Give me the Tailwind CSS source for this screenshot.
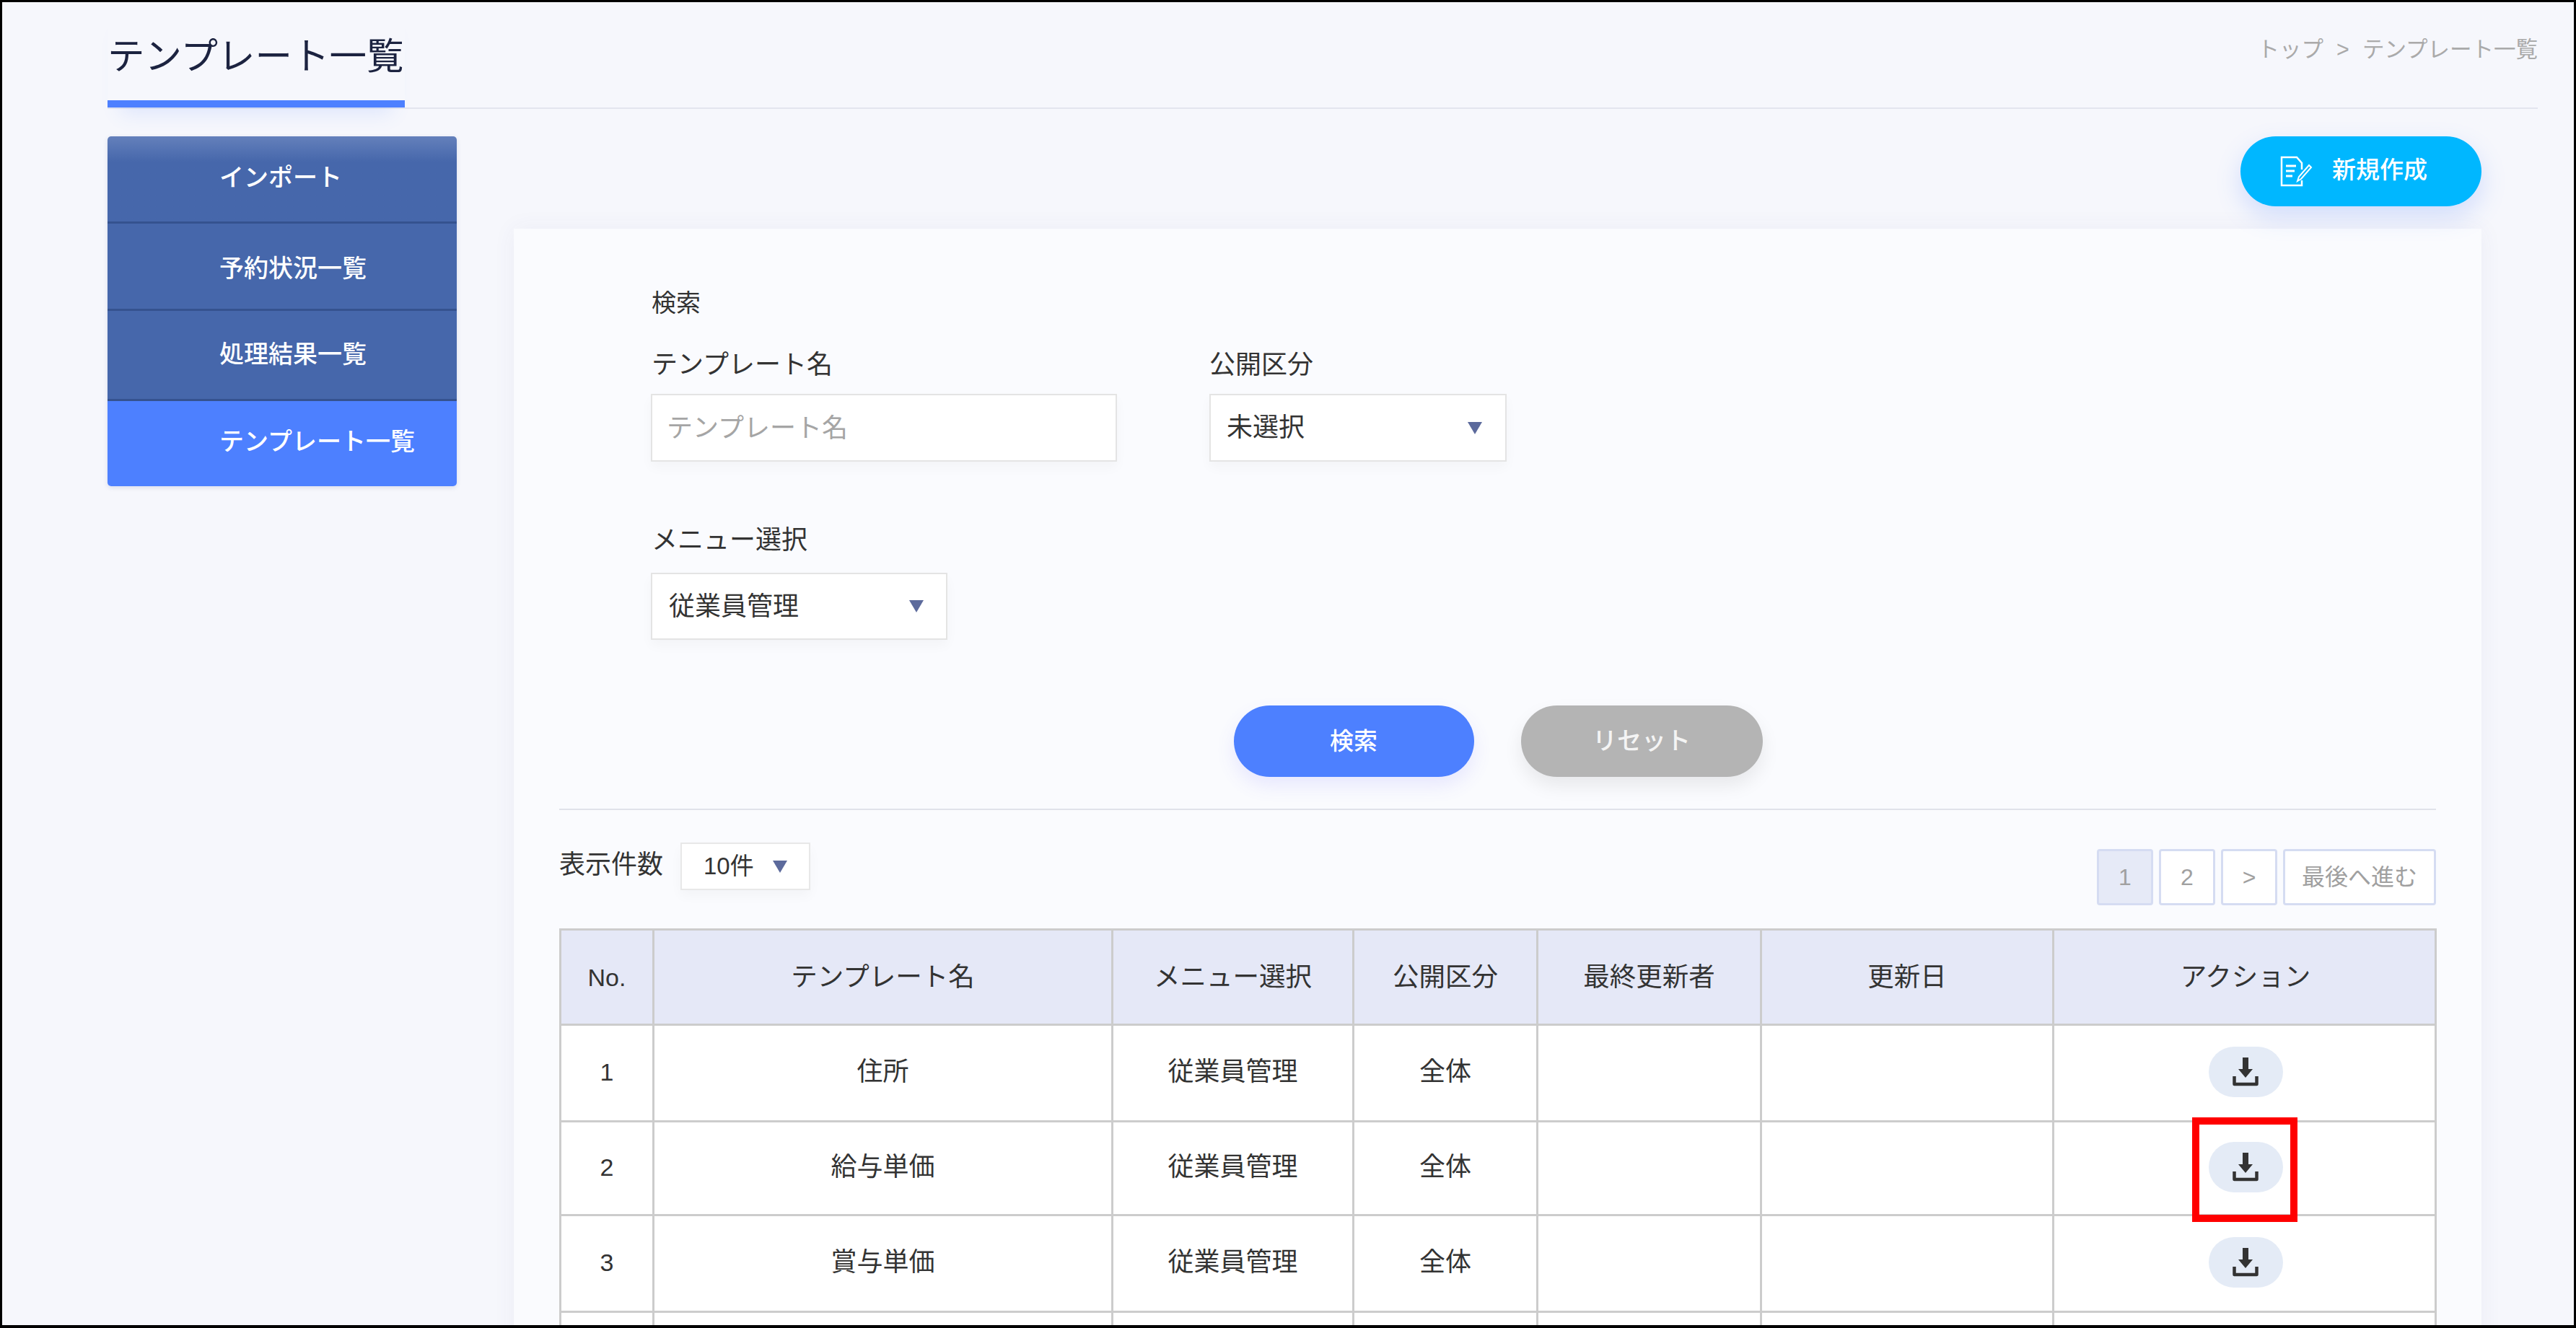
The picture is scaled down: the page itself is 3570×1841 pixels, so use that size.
<!DOCTYPE html>
<html lang="ja">
<head>
  <meta charset="UTF-8">
  <meta name="viewport" content="width=device-width, initial-scale=1.0">
  <title>テンプレート一覧</title>
  <script src="https://cdn.jsdelivr.net/npm/@tailwindcss/browser@4"></script>
</head>
<body class="bg-[#f6f7fc] font-['Liberation_Sans','Noto_Sans_CJK_JP',sans-serif] text-[#333]">
  <div class="w-[3570px] h-[1841px] overflow-hidden border-x-[3px] border-t-[3px] border-b-[4px] border-black bg-[#f6f7fc]">
    <!-- header -->
    <header class="ml-[146px] w-[3368px] h-[148px] flex justify-between border-b-2 border-[#e3e5ef]">
      <div class="w-[412px] h-[146px] border-b-[10px] border-[#4d80ff] pt-[49px] shadow-[0_26px_26px_-18px_rgba(77,128,255,0.14)]">
        <h1 class="text-[51.5px] leading-[52px] font-normal text-[#1c2340] whitespace-nowrap">テンプレート一覧</h1>
      </div>
      <p class="pt-[49px] text-[30.5px] leading-[32px] text-[#aaa] whitespace-nowrap">トップ<span class="mx-[18px]">&gt;</span>テンプレート一覧</p>
    </header>

    <div class="flex ml-[146px] mt-[38px] gap-[79px]">
      <!-- side menu -->
      <nav class="w-[484px] h-[485px] shrink-0 rounded-[5px] overflow-hidden text-white text-[34px] font-medium leading-[40px] shadow-[0_2px_6px_rgba(60,80,140,0.15)]">
        <a class="flex items-center pl-[155px] pb-[4px] h-[121px] border-b-[3px] border-[#35528f] bg-gradient-to-b from-[#6480bb] via-[#4667ab] via-30% to-[#4667ab]">インポート</a>
        <a class="flex items-center pl-[155px] pt-[6px] h-[121px] border-b-[3px] border-[#35528f] bg-[#4667ab]">予約状況一覧</a>
        <a class="flex items-center pl-[155px] pb-[2px] h-[125px] border-b-[3px] border-[#35528f] bg-[#4667ab]">処理結果一覧</a>
        <a class="flex items-center pl-[155px] pb-[6px] h-[118px] bg-[#4d80ff]">テンプレート一覧</a>
      </nav>

      <main class="w-[2727px] shrink-0">
        <div class="flex justify-end">
          <button class="w-[334px] h-[97px] rounded-full bg-[#00b7ff] text-white text-[33px] font-medium flex items-center pl-[55px] gap-[27px] shadow-[0_14px_34px_rgba(77,128,255,0.22)]">
            <svg class="w-[45px] h-[43px]" viewBox="0 0 45 43" fill="none" stroke="#fff" stroke-width="2.5">
              <path d="M30 19V10L23 2H2v39h28v-7"/>
              <path d="M8 14h14M8 21h12M8 28h9" stroke-width="3"/>
              <path d="M24 35l2-6L40 13l3 3L29 32z" stroke-width="2"/>
            </svg>
            <span class="pb-[4px]">新規作成</span>
          </button>
        </div>

        <!-- search card -->
        <section class="mt-[31px] h-[1600px] bg-[#fafbfe] px-[63px] shadow-[0_0_30px_rgba(60,70,140,0.06)]">
          <div class="pl-[127px] pt-[85px] text-[36px] leading-[36px]">
            <p class="text-[34px] pl-[1px]">検索</p>
            <div class="flex gap-[128px] mt-[50px]">
              <div>
                <label class="block pl-[1px]">テンプレート名</label>
                <input class="block mt-[22px] w-[646px] h-[94px] px-[20px] pt-[2px] bg-white border-2 border-[#e4e4e4] shadow-[0_8px_16px_rgba(0,0,0,0.03)] text-[36px] placeholder:text-[#a5a5a5]" placeholder="テンプレート名">
              </div>
              <div>
                <label class="block">公開区分</label>
                <div class="mt-[22px] w-[412px] h-[94px] pl-[22px] pr-[32px] flex items-center justify-between bg-white border-2 border-[#e4e4e4] shadow-[0_8px_16px_rgba(0,0,0,0.03)]">
                  <span>未選択</span>
                  <svg class="w-[20px] h-[17px]" viewBox="0 0 20 17"><polygon points="0,0 20,0 10,17" fill="#5c6a9c"/></svg>
                </div>
              </div>
            </div>
            <div class="mt-[91px]">
              <label class="block pl-[1px]">メニュー選択</label>
              <div class="mt-[27px] w-[411px] h-[93px] pl-[23px] pr-[31px] flex items-center justify-between bg-white border-2 border-[#e4e4e4] shadow-[0_8px_16px_rgba(0,0,0,0.03)]">
                <span>従業員管理</span>
                <svg class="w-[20px] h-[17px]" viewBox="0 0 20 17"><polygon points="0,0 20,0 10,17" fill="#5c6a9c"/></svg>
              </div>
            </div>
          </div>

          <div class="flex justify-center gap-[65px] mt-[91px] pl-[1px]">
            <button class="w-[333px] h-[99px] rounded-full bg-[#4d80ff] text-white text-[33px] font-medium shadow-[0_12px_26px_rgba(100,90,255,0.12)]">検索</button>
            <button class="w-[335px] h-[99px] rounded-full bg-[#b4b4b4] text-[#f4f4f4] text-[34px] font-medium shadow-[0_12px_26px_rgba(0,0,0,0.08)]">リセット</button>
          </div>

          <hr class="mt-[44px] border-0 h-[2px] bg-[#e0e2ea]">

          <!-- list controls -->
          <div class="flex justify-between items-start mt-[45px] h-[119px]">
            <div class="flex items-center gap-[24px] text-[36px] leading-[36px]">
              <span class="-mt-[4px]">表示件数</span>
              <div class="w-[180px] h-[66px] pl-[30px] pr-[30px] flex items-center justify-between bg-white border-2 border-[#e8e8e8] text-[33px] shadow-[0_8px_16px_rgba(0,0,0,0.03)]">
                <span>10件</span>
                <svg class="w-[20px] h-[17px]" viewBox="0 0 20 17"><polygon points="0,0 20,0 10,17" fill="#5c6a9c"/></svg>
              </div>
            </div>
            <div class="flex gap-[8px] mt-[9px] text-[32px] text-[#a0a0a0]">
              <span class="w-[78px] h-[78px] flex items-center justify-center rounded-[4px] border-[3px] border-[#d5dcf2] bg-[#e6eaf7]">1</span>
              <span class="w-[78px] h-[78px] flex items-center justify-center rounded-[4px] border-[3px] border-[#d5dcf2] bg-white">2</span>
              <span class="w-[78px] h-[78px] flex items-center justify-center rounded-[4px] border-[3px] border-[#d5dcf2] bg-white">&gt;</span>
              <span class="w-[212px] h-[78px] flex items-center justify-center rounded-[4px] border-[3px] border-[#d5dcf2] bg-white whitespace-nowrap">最後へ進む</span>
            </div>
          </div>

          <!-- table -->
          <table class="w-[2599px] table-fixed border-collapse bg-white text-[36px] leading-[40px] text-center">
            <colgroup>
              <col class="w-[129px]"><col class="w-[636px]"><col class="w-[334px]"><col class="w-[255px]"><col class="w-[310px]"><col class="w-[405px]"><col class="w-[530px]">
            </colgroup>
            <thead class="bg-[#e5e8f7]">
              <tr class="h-[132px]">
                <th class="border-[3px] border-[#ccc] font-normal text-[34px]">No.</th>
                <th class="border-[3px] border-[#ccc] font-normal text-[36.5px]">テンプレート名</th>
                <th class="border-[3px] border-[#ccc] font-normal text-[36.5px]">メニュー選択</th>
                <th class="border-[3px] border-[#ccc] font-normal text-[36.5px]">公開区分</th>
                <th class="border-[3px] border-[#ccc] font-normal text-[36.5px]">最終更新者</th>
                <th class="border-[3px] border-[#ccc] font-normal text-[36.5px]">更新日</th>
                <th class="border-[3px] border-[#ccc] font-normal text-[36.5px] pl-[3px]">アクション</th>
              </tr>
            </thead>
            <tbody class="[&_td]:pb-[4px]">
              <tr class="h-[134px]">
                <td class="border-[3px] border-[#ccc] text-[34px]">1</td>
                <td class="border-[3px] border-[#ccc]">住所</td>
                <td class="border-[3px] border-[#ccc]">従業員管理</td>
                <td class="border-[3px] border-[#ccc]">全体</td>
                <td class="border-[3px] border-[#ccc]"></td>
                <td class="border-[3px] border-[#ccc]"></td>
                <td class="border-[3px] border-[#ccc] pl-[3px]">
                  <button class="w-[103px] h-[70px] rounded-full bg-[#e4ebf6] inline-flex items-center justify-center align-middle">
                    <svg class="w-[36px] h-[40px]" viewBox="0 0 36 40" fill="none"><path d="M14 0h8v16h6L18 28 8 16h6z" fill="#333"/><path d="M2.5 26v11h31V26" stroke="#333" stroke-width="4.5" stroke-linejoin="round"/></svg>
                  </button>
                </td>
              </tr>
              <tr class="h-[130px]">
                <td class="border-[3px] border-[#ccc] text-[34px]">2</td>
                <td class="border-[3px] border-[#ccc]">給与単価</td>
                <td class="border-[3px] border-[#ccc]">従業員管理</td>
                <td class="border-[3px] border-[#ccc]">全体</td>
                <td class="border-[3px] border-[#ccc]"></td>
                <td class="border-[3px] border-[#ccc]"></td>
                <td class="border-[3px] border-[#ccc] pl-[3px]">
                  <button class="relative w-[103px] h-[70px] rounded-full bg-[#e4ebf6] inline-flex items-center justify-center align-middle">
                    <svg class="w-[36px] h-[40px]" viewBox="0 0 36 40" fill="none"><path d="M14 0h8v16h6L18 28 8 16h6z" fill="#333"/><path d="M2.5 26v11h31V26" stroke="#333" stroke-width="4.5" stroke-linejoin="round"/></svg>
                    <span class="absolute -left-[23px] -top-[34px] w-[146px] h-[145px] border-[10px] border-[#ff0000]"></span>
                  </button>
                </td>
              </tr>
              <tr class="h-[134px]">
                <td class="border-[3px] border-[#ccc] text-[34px]">3</td>
                <td class="border-[3px] border-[#ccc]">賞与単価</td>
                <td class="border-[3px] border-[#ccc]">従業員管理</td>
                <td class="border-[3px] border-[#ccc]">全体</td>
                <td class="border-[3px] border-[#ccc]"></td>
                <td class="border-[3px] border-[#ccc]"></td>
                <td class="border-[3px] border-[#ccc] pl-[3px]">
                  <button class="w-[103px] h-[70px] rounded-full bg-[#e4ebf6] inline-flex items-center justify-center align-middle">
                    <svg class="w-[36px] h-[40px]" viewBox="0 0 36 40" fill="none"><path d="M14 0h8v16h6L18 28 8 16h6z" fill="#333"/><path d="M2.5 26v11h31V26" stroke="#333" stroke-width="4.5" stroke-linejoin="round"/></svg>
                  </button>
                </td>
              </tr>
              <tr class="h-[130px]">
                <td class="border-[3px] border-[#ccc]"></td>
                <td class="border-[3px] border-[#ccc]"></td>
                <td class="border-[3px] border-[#ccc]"></td>
                <td class="border-[3px] border-[#ccc]"></td>
                <td class="border-[3px] border-[#ccc]"></td>
                <td class="border-[3px] border-[#ccc]"></td>
                <td class="border-[3px] border-[#ccc]"></td>
              </tr>
            </tbody>
          </table>
        </section>
      </main>
    </div>
  </div>
</body>
</html>
